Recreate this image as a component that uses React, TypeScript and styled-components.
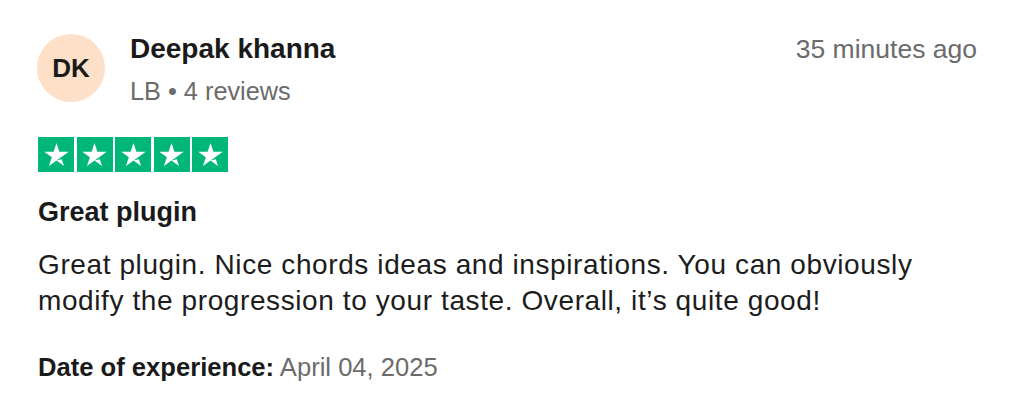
import React from 'react';
import styled, { createGlobalStyle } from 'styled-components';

const GlobalStyle = createGlobalStyle`
    body {
        margin: 0;
        background: #ffffff;
        font-family: "Liberation Sans", Arial, Helvetica, sans-serif;
        color: #1c1c1c;
    }
`;

const Card = styled.article`
    width: 1024px;
    height: 412px;
    box-sizing: border-box;
    padding: 33px 47px 0 38px;
    background: #ffffff;
`;

const Header = styled.div`
    display: flex;
    justify-content: space-between;
    align-items: flex-start;
`;

const Consumer = styled.div`
    display: flex;
    align-items: flex-start;
    gap: 25px;
`;

const Avatar = styled.div`
    width: 68px;
    height: 68px;
    margin-top: 1px;
    margin-left: -1px;
    border-radius: 50%;
    background: #fde0c7;
    display: flex;
    align-items: center;
    justify-content: center;
    font-size: 26px;
    font-weight: 700;
    color: #1a1a1a;
`;

const Info = styled.div`
    display: flex;
    flex-direction: column;
`;

const Name = styled.div`
    font-size: 28px;
    line-height: 32px;
    font-weight: 700;
    color: #1a1a1a;
`;

const Meta = styled.div`
    margin-top: 11px;
    font-size: 25.3px;
    line-height: 30px;
    color: #6b6b6b;
`;

const Time = styled.div`
    font-size: 26.5px;
    line-height: 32px;
    color: #6b6b6b;
`;

const Stars = styled.div`
    display: flex;
    gap: 2.5px;
    margin-top: 31px;
`;

const StarBox = styled.div`
    width: 36px;
    height: 35px;
    background: #00b67a;
    display: flex;
    align-items: center;
    justify-content: center;
`;

const Title = styled.h2`
    margin: 24px 0 0;
    font-size: 27px;
    line-height: 32px;
    font-weight: 700;
    color: #1a1a1a;
`;

const Body = styled.p`
    margin: 19px 0 0;
    font-size: 28px;
    line-height: 36px;
    letter-spacing: 0.6px;
    color: #1c1c1c;
`;

const DateLine = styled.p`
    margin: 33px 0 0;
    font-size: 25.6px;
    line-height: 30px;
`;

const DateLabel = styled.strong`
    font-weight: 700;
    color: #1a1a1a;
`;

const DateValue = styled.span`
    color: #6b6b6b;
`;

const Star: React.FC = () => (
    <StarBox>
        <svg width="35" height="35" viewBox="0 0 96 96">
            <path
                fill="#fff"
                d="M48 64.7 62.6 61 68.7 79.8Z M81.6 40.4H55.9L48 16.2 40.1 40.4H14.4L35.2 55.4 27.3 79.6 48.1 64.6 60.9 55.4Z"
            />
        </svg>
    </StarBox>
);

const App: React.FC = () => {
    const rating = 5;

    return (
        <Card>
            <GlobalStyle />
            <Header>
                <Consumer>
                    <Avatar>DK</Avatar>
                    <Info>
                        <Name>Deepak khanna</Name>
                        <Meta>LB • 4 reviews</Meta>
                    </Info>
                </Consumer>
                <Time>35 minutes ago</Time>
            </Header>
            <Stars>
                {Array.from({ length: rating }).map((_, i) => (
                    <Star key={i} />
                ))}
            </Stars>
            <Title>Great plugin</Title>
            <Body>
                Great plugin. Nice chords ideas and inspirations. You can obviously modify the
                progression to your taste. Overall, it’s quite good!
            </Body>
            <DateLine>
                <DateLabel>Date of experience:</DateLabel> <DateValue>April 04, 2025</DateValue>
            </DateLine>
        </Card>
    );
};

export default App;
